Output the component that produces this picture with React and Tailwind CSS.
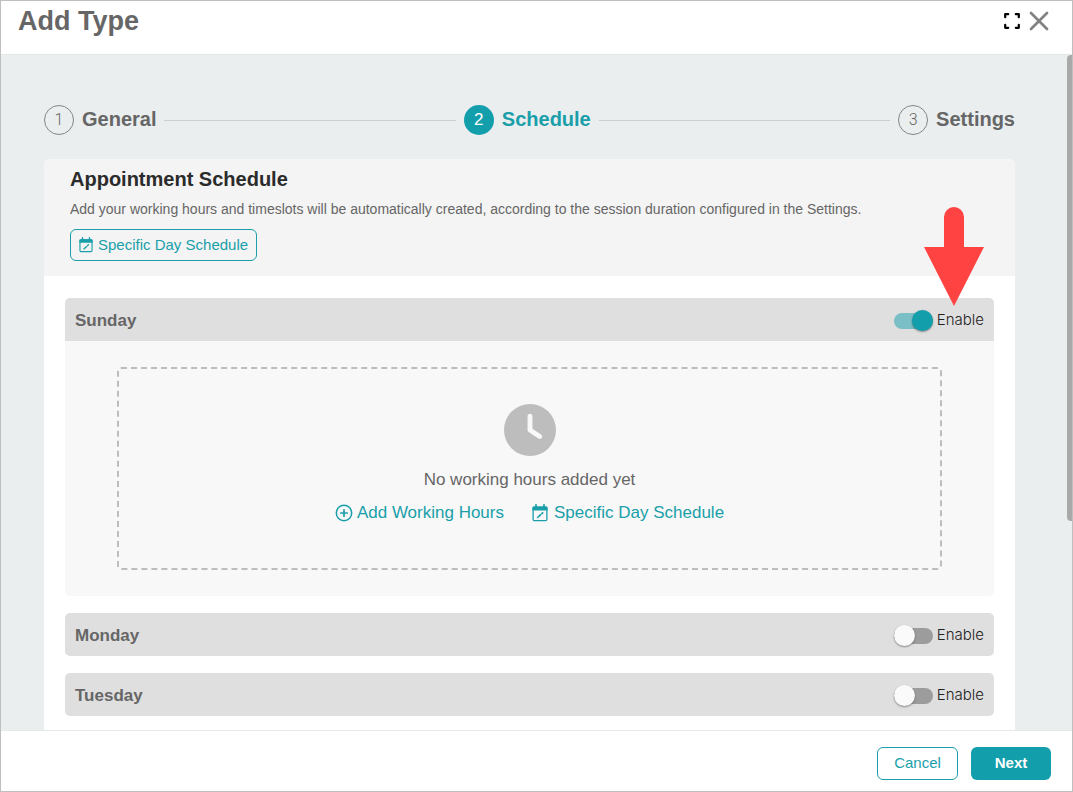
import { Fragment, useState } from "react";
import { FaClock } from "react-icons/fa6";

const STEPS = [
  { number: 1, label: "General" },
  { number: 2, label: "Schedule" },
  { number: 3, label: "Settings" },
];

function CalendarEditIcon({ className }) {
  return (
    <svg viewBox="0 0 16 18" className={className} fill="none" aria-hidden="true">
      <path d="M4 0.8V4M12 0.8V4" stroke="currentColor" strokeWidth="1.7" strokeLinecap="round" />
      <rect x="1.1" y="3.2" width="13.8" height="13.4" rx="1.4" stroke="currentColor" strokeWidth="1.3" />
      <path d="M1.6 2.4h12.8q1.2 0 1.2 1.2V6.4H.4V3.6q0-1.2 1.2-1.2z" fill="currentColor" />
      <path d="M6 13.2L9 10.4" stroke="currentColor" strokeWidth="1.7" />
      <path d="M9.9 9.6L10.7 8.8" stroke="currentColor" strokeWidth="1.7" strokeLinecap="round" />
      <path d="M4.9 14.2V12.4L6.7 14.2z" fill="currentColor" />
    </svg>
  );
}

function PlusCircleIcon() {
  return (
    <svg viewBox="0 0 18 18" className="size-[18px]" fill="none" stroke="currentColor" strokeWidth="1.5" aria-hidden="true">
      <circle cx="9" cy="9" r="7.7" />
      <path d="M9 5.8v6.4M5.8 9h6.4" strokeWidth="1.7" strokeLinecap="round" />
    </svg>
  );
}

function Stepper({ current }) {
  return (
    <ol className="flex items-center gap-2">
      {STEPS.map((step, i) => {
        const active = step.number === current;
        return (
          <Fragment key={step.number}>
            {i > 0 && <li aria-hidden="true" className="h-px flex-1 bg-[#c9cecf]" />}
            <li className="flex items-center gap-2" aria-current={active ? "step" : undefined}>
              <span
                className={
                  active
                    ? "flex size-[30px] items-center justify-center rounded-full bg-[#139eac] text-[17px] text-white"
                    : "flex size-[30px] items-center justify-center rounded-full border border-[#848686] font-['Roboto',sans-serif] text-[16px] font-light text-[#666666]"
                }
              >
                {step.number}
              </span>
              <span
                className={
                  active
                    ? "pb-[2px] text-[20px] leading-7 font-bold text-[#1a9faa]"
                    : "pb-[2px] text-[20px] leading-7 font-bold text-[#666666]"
                }
              >
                {step.label}
              </span>
            </li>
          </Fragment>
        );
      })}
    </ol>
  );
}

function Toggle({ id, checked, onChange }) {
  return (
    <label htmlFor={id} className="flex cursor-pointer items-center gap-1 font-['Inter',sans-serif] text-[15px] font-light text-[#222222]">
      <input id={id} type="checkbox" role="switch" checked={checked} onChange={onChange} className="sr-only" />
      <span
        className={
          checked
            ? "flex h-4 w-[39px] items-center justify-end rounded-full bg-[#7bbfc6]"
            : "flex h-4 w-[39px] items-center justify-start rounded-full bg-[#9c9c9c]"
        }
      >
        <span
          className={
            checked
              ? "size-[21px] shrink-0 rounded-full bg-[#139eac] shadow-[0_1px_2px_rgba(0,0,0,0.4)]"
              : "size-[21px] shrink-0 rounded-full bg-[#fafafa] shadow-[0_1px_2px_rgba(0,0,0,0.4)]"
          }
        />
      </span>
      Enable
    </label>
  );
}

function PointerArrow() {
  return (
    <svg viewBox="0 0 60 99" className="pointer-events-none absolute right-[10px] bottom-[35px] z-10 h-[99px] w-[60px]" aria-hidden="true">
      <path d="M20 10a10 10 0 0 1 20 0v30h20L30 99 0 40h20z" fill="#ff4343" />
    </svg>
  );
}

function EmptyHours() {
  return (
    <div className="rounded-b-[5px] bg-[#f8f8f8] px-[52px] py-[26px]">
      <div className="flex flex-col items-center rounded-[4px] border-2 border-dashed border-[#bdbdbd] pt-[35px] pb-[43px] text-[17px] leading-6">
        <FaClock className="size-[52px] text-[#bdbdbd]" />
        <p className="mt-3 text-[#666666]">No working hours added yet</p>
        <div className="mt-[9px] flex gap-7 text-[#1a9faa]">
          <button type="button" className="flex items-center gap-1">
            <PlusCircleIcon />
            Add Working Hours
          </button>
          <button type="button" className="flex items-center gap-[6px]">
            <CalendarEditIcon className="h-[18px] w-4" />
            Specific Day Schedule
          </button>
        </div>
      </div>
    </div>
  );
}

function DayRow({ day, enabled, onToggle, pointed }) {
  return (
    <section>
      <div
        className={
          enabled
            ? "relative flex h-[43px] items-center justify-between rounded-t-[5px] bg-[#dfdfdf] px-[10px] pt-[2px]"
            : "relative flex h-[43px] items-center justify-between rounded-[5px] bg-[#dfdfdf] px-[10px] pt-[2px]"
        }
      >
        <h3 className="text-[17px] font-bold text-[#666666]">{day}</h3>
        <Toggle id={`enable-${day}`} checked={enabled} onChange={onToggle} />
        {pointed && <PointerArrow />}
      </div>
      {enabled && <EmptyHours />}
    </section>
  );
}

export default function App() {
  const [enabled, setEnabled] = useState({ Sunday: true, Monday: false, Tuesday: false });
  const toggle = (day) => setEnabled((prev) => ({ ...prev, [day]: !prev[day] }));

  return (
    <div className="flex h-screen flex-col border border-[#bfbfbf] bg-white font-['Liberation_Sans',Arial,sans-serif]">
      <header className="flex h-[53px] shrink-0 items-start justify-between pt-1 pr-[23px] pl-[17px]">
        <h1 className="text-[27px] leading-8 font-bold text-[#666666]">Add Type</h1>
        <div className="flex items-center gap-2 pt-[6px]">
          <button type="button" aria-label="Full screen">
            <svg viewBox="0 0 18 18" className="size-[18px]" fill="none" stroke="#000" strokeWidth="2.2" strokeLinecap="round" strokeLinejoin="round" aria-hidden="true">
              <path d="M2.2 5.2V2.2h3M12.8 2.2h3v3M15.8 12.8v3h-3M5.2 15.8H2.2v-3" />
            </svg>
          </button>
          <button type="button" aria-label="Close">
            <svg viewBox="0 0 20 20" className="size-5" fill="none" stroke="#828282" strokeWidth="2.7" strokeLinecap="round" aria-hidden="true">
              <path d="M2 2l16 16M18 2L2 18" />
            </svg>
          </button>
        </div>
      </header>

      <div className="relative flex min-h-0 flex-1 flex-col bg-[#eaeeef]">
        <main className="min-h-0 flex-1 overflow-hidden border-t border-[#e4e8e9] pt-[50px] pr-[57px] pl-[43px]">
          <Stepper current={2} />

          <div className="mt-6 rounded-t-[6px] bg-white">
            <div className="flex flex-col items-start rounded-t-[6px] bg-[#f4f4f4] px-[26px] pt-[6px] pb-[15px]">
              <h2 className="text-[20px] leading-7 font-bold text-[#2b2b2b]">Appointment Schedule</h2>
              <p className="mt-[6px] text-[14px] leading-5 text-[#666666]">
                Add your working hours and timeslots will be automatically created, according to the session duration
                configured in the Settings.
              </p>
              <button
                type="button"
                className="mt-[10px] flex h-8 items-center gap-[5px] rounded-[6px] border border-[#1a9faa] px-2 text-[15px] text-[#1a9faa]"
              >
                <CalendarEditIcon className="h-4 w-[14px]" />
                Specific Day Schedule
              </button>
            </div>

            <div className="flex flex-col gap-[17px] px-[21px] py-[22px]">
              {Object.keys(enabled).map((day) => (
                <DayRow
                  key={day}
                  day={day}
                  enabled={enabled[day]}
                  onToggle={() => toggle(day)}
                  pointed={day === "Sunday"}
                />
              ))}
            </div>
          </div>
        </main>
        <div aria-hidden="true" className="absolute top-px right-0 h-[69%] w-[5px] rounded-l-[4px] bg-[#a9a9a9]" />
      </div>

      <footer className="flex h-[61px] shrink-0 items-start justify-end gap-[13px] border-t border-[#e6eaeb] pt-4 pr-[21px] text-[15px]">
        <button type="button" className="h-[33px] w-[81px] rounded-[6px] border border-[#1a9faa] text-[#1a9faa]">
          Cancel
        </button>
        <button type="button" className="h-[33px] w-20 rounded-[6px] bg-[#139eac] font-bold text-white">
          Next
        </button>
      </footer>
    </div>
  );
}
